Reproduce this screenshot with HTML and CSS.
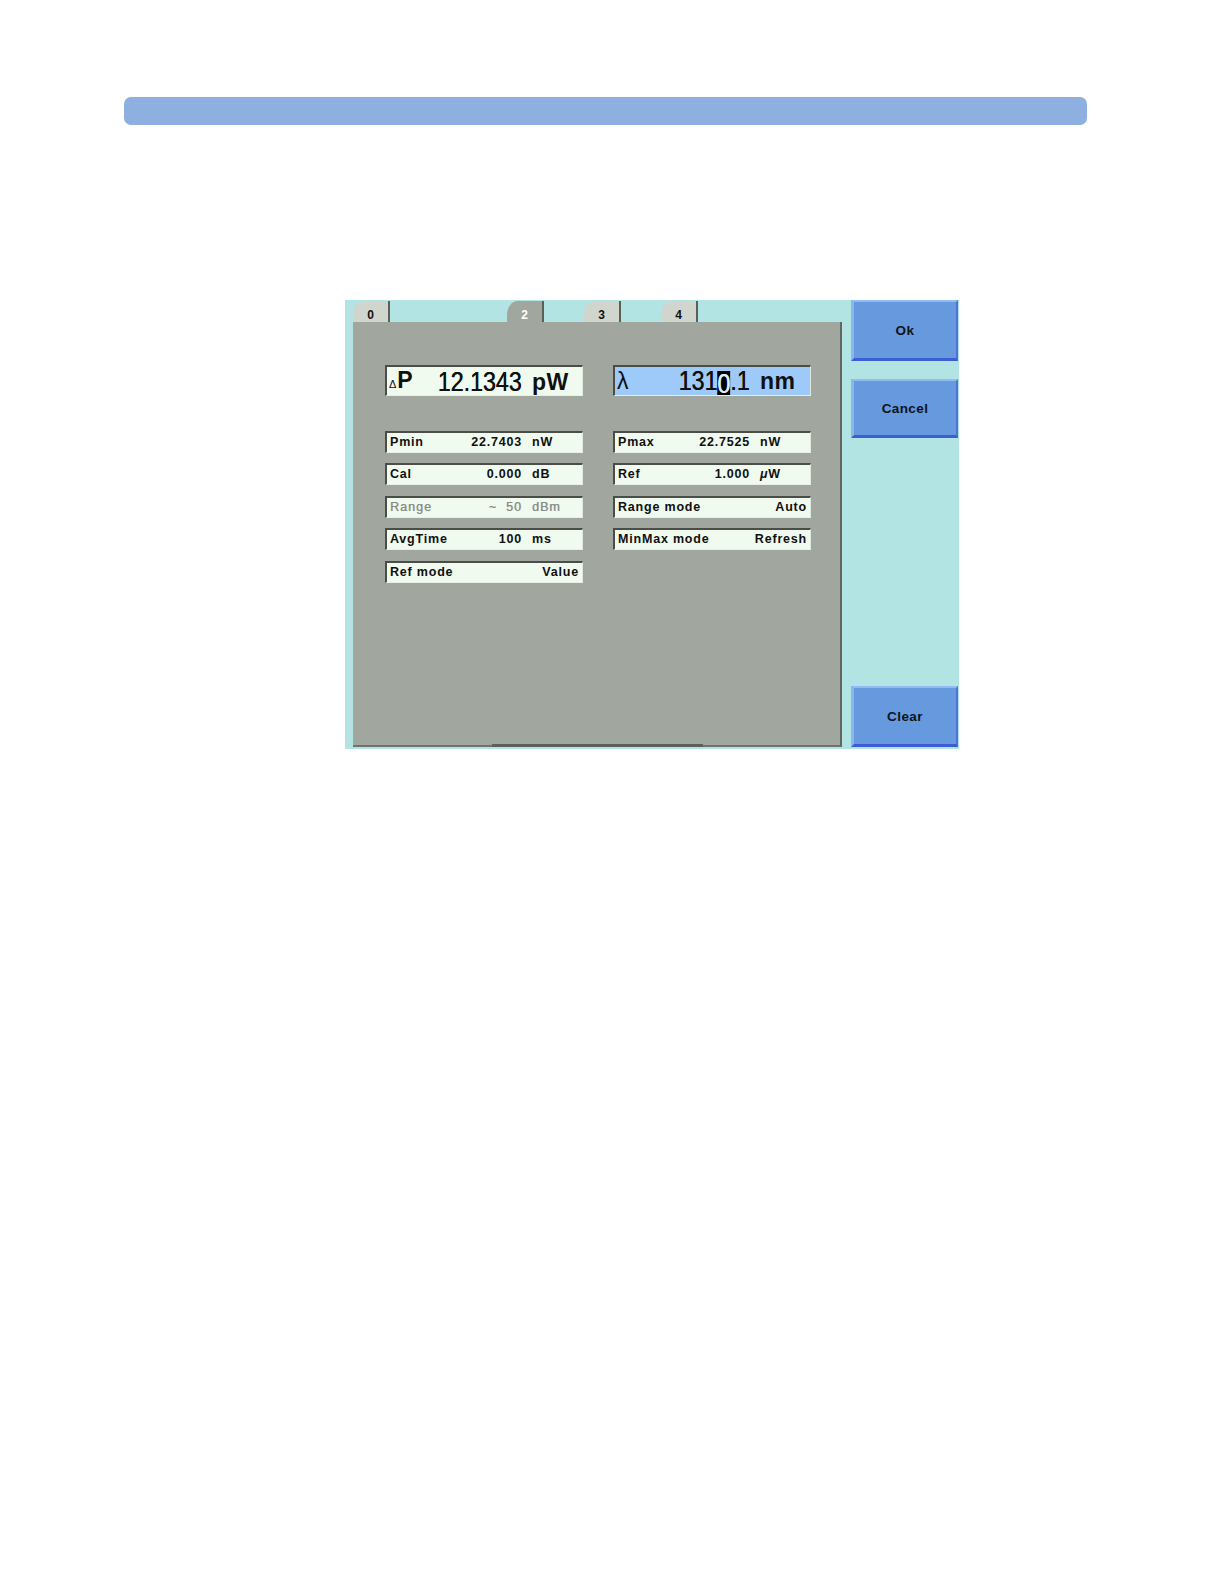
FILE: index.html
```html
<!DOCTYPE html>
<html>
<head>
<meta charset="utf-8">
<link rel="stylesheet" href="styles.css">
</head>
<body>
<div class="topbar"></div>
<div class="screen">
  <div class="main">
    <div class="tabs">
      <div class="tab">0</div>
      <div class="tab hidden">1</div>
      <div class="tab active">2</div>
      <div class="tab">3</div>
      <div class="tab">4</div>
    </div>
    <div class="panel">
      <div class="grid">
        <div class="field big">
          <span class="label"><span class="delta">&#916;</span>P</span>
          <span class="value">12.1343</span>
          <span class="unit">pW</span>
        </div>
        <div class="field big lambda">
          <span class="label lam">&#955;</span>
          <span class="value">131<span class="cursor">0</span>.1</span>
          <span class="unit">nm</span>
        </div>

        <div class="field small first">
          <span class="label">Pmin</span>
          <span class="value">22.7403</span>
          <span class="unit">nW</span>
        </div>
        <div class="field small first">
          <span class="label">Pmax</span>
          <span class="value">22.7525</span>
          <span class="unit">nW</span>
        </div>

        <div class="field small">
          <span class="label">Cal</span>
          <span class="value">0.000</span>
          <span class="unit">dB</span>
        </div>
        <div class="field small">
          <span class="label">Ref</span>
          <span class="value">1.000</span>
          <span class="unit"><i>&#956;</i>W</span>
        </div>

        <div class="field small disabled">
          <span class="label">Range</span>
          <span class="value">~&nbsp;&nbsp;50</span>
          <span class="unit">dBm</span>
        </div>
        <div class="field small wide">
          <span class="label">Range mode</span>
          <span class="value">Auto</span>
        </div>

        <div class="field small">
          <span class="label">AvgTime</span>
          <span class="value">100</span>
          <span class="unit">ms</span>
        </div>
        <div class="field small wide">
          <span class="label">MinMax mode</span>
          <span class="value">Refresh</span>
        </div>

        <div class="field small wide">
          <span class="label">Ref mode</span>
          <span class="value">Value</span>
        </div>
      </div>
    </div>
  </div>
  <div class="side">
    <div class="btn ok">Ok</div>
    <div class="btn cancel">Cancel</div>
    <div class="spacer"></div>
    <div class="btn clear">Clear</div>
  </div>
</div>
</body>
</html>
```

FILE: styles.css
```css
html, body {
  margin: 0;
  padding: 0;
  background: #ffffff;
}
body {
  font-family: "Liberation Sans", Arial, sans-serif;
  color: #101010;
  width: 1222px;
  height: 1582px;
  overflow: hidden;
}
.topbar {
  margin: 97px 0 0 124px;
  width: 963px;
  height: 28px;
  border-radius: 7px;
  background: #8db0e0;
}
.screen {
  margin: 175px 0 0 345px;
  width: 614px;
  height: 449px;
  background: #b1e4e2;
  display: flex;
}
.main {
  width: 497px;
  display: flex;
  flex-direction: column;
}
.tabs {
  height: 22px;
  padding-left: 8px;
  display: flex;
  align-items: flex-end;
  gap: 40px;
}
.tab {
  box-sizing: border-box;
  width: 37px;
  height: 21px;
  padding-top: 5px;
  background: #d0d5cd;
  border-right: 2px solid #5b5f59;
  border-top-left-radius: 11px 14px;
  font-size: 12px;
  font-weight: bold;
  line-height: 18px;
  text-align: center;
  color: #101010;
}
.tab.hidden {
  visibility: hidden;
}
.tab.active {
  background: #a1a69e;
  color: #ffffff;
}
.panel {
  position: relative;
  margin-left: 8px;
  width: 487px;
  height: 423px;
  background: #a1a69e;
  border-right: 2px solid #62665f;
  border-bottom: 2px solid #6f736c;
}
.panel::after {
  content: "";
  position: absolute;
  left: 139px;
  width: 211px;
  bottom: -2px;
  height: 3px;
  background: #5c605a;
}
.grid {
  padding: 43px 0 0 32px;
  display: grid;
  grid-template-columns: 198px 198px;
  column-gap: 30px;
  row-gap: 10.5px;
  align-items: start;
}
.field {
  box-sizing: border-box;
  width: 198px;
  display: grid;
  grid-template-columns: 1fr auto 50px;
  column-gap: 10px;
  align-items: center;
  background: #f1faef;
  border-style: solid;
  border-width: 2px 1px 1px 2px;
  border-color: #4a4d48 #dfe8dd #e9f1e7 #4a4d48;
  white-space: nowrap;
}
.field.small {
  height: 22px;
  font-size: 12.5px;
  font-weight: bold;
  letter-spacing: 0.8px;
  line-height: 19px;
}
.field.small.first {
  margin-top: 24px;
}
.field .label {
  padding-left: 3px;
}
.field .value {
  text-align: right;
}
.field.wide {
  grid-template-columns: 1fr auto;
}
.field.wide .value {
  padding-right: 3px;
}
.field.disabled {
  color: #878b85;
  font-weight: normal;
  letter-spacing: 1px;
  text-shadow: 0.5px 0 0 #a9ada7;
}
.field.big {
  height: 31px;
  line-height: 26px;
  font-size: 27px;
}
.field.big .value {
  display: inline-block;
  transform: scaleX(0.86);
  transform-origin: right center;
  text-shadow: 0.4px 0 0 currentColor;
}
.field.big .unit {
  font-weight: bold;
  font-size: 23px;
  letter-spacing: 0.5px;
}
.field.big .label {
  font-weight: bold;
  font-size: 23px;
  padding-left: 2px;
}
.delta {
  font-size: 11px;
  font-weight: normal;
  margin-right: 1px;
}
.lambda {
  background: #9dcaf8;
}
.field.big .label.lam {
  font-weight: normal;
  font-size: 23px;
}
.cursor {
  display: inline-block;
  background: #000000;
  color: #dcecff;
  line-height: 22px;
  padding-top: 2px;
  margin-bottom: -6px;
  vertical-align: -3px;
}
.side {
  flex: 1;
  display: flex;
  flex-direction: column;
  padding: 0 1px 2px 9px;
}
.btn {
  box-sizing: border-box;
  width: 107px;
  background: #6699dd;
  border-style: solid;
  border-width: 2px 2px 3px 3px;
  border-color: #8fbcf3 #4d72d6 #3c5ed3 #8bb6ef;
  font-size: 13.5px;
  font-weight: bold;
  letter-spacing: 0.4px;
  color: #0c1420;
  display: flex;
  align-items: center;
  justify-content: center;
}
.btn.ok {
  height: 61px;
}
.btn.cancel {
  height: 59px;
  margin-top: 18px;
}
.spacer {
  flex: 1;
}
.btn.clear {
  height: 61px;
}
```
